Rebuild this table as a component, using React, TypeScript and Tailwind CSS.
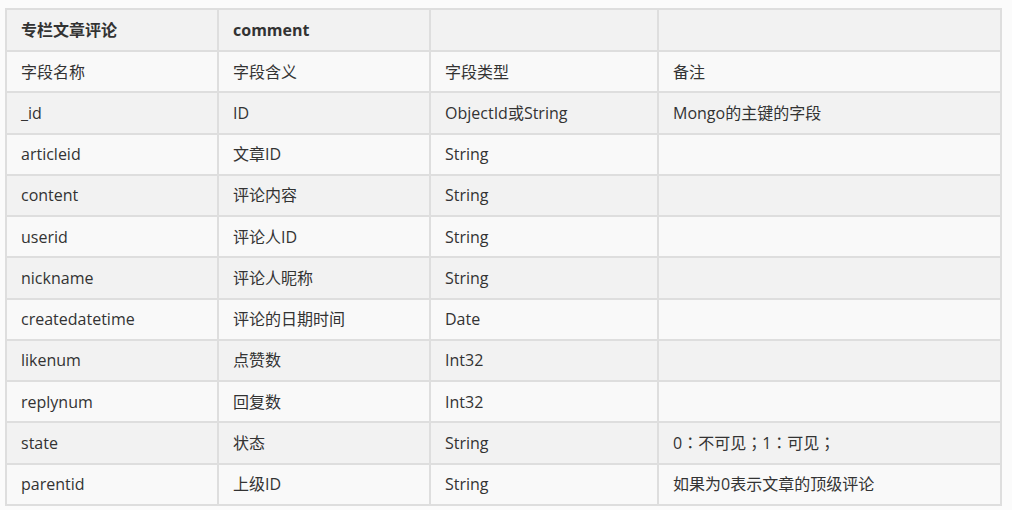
const rows: string[][] = [
  ['字段名称', '字段含义', '字段类型', '备注'],
  ['_id', 'ID', 'ObjectId或String', 'Mongo的主键的字段'],
  ['articleid', '文章ID', 'String', ''],
  ['content', '评论内容', 'String', ''],
  ['userid', '评论人ID', 'String', ''],
  ['nickname', '评论人昵称', 'String', ''],
  ['createdatetime', '评论的日期时间', 'Date', ''],
  ['likenum', '点赞数', 'Int32', ''],
  ['replynum', '回复数', 'Int32', ''],
  ['state', '状态', 'String', '0：不可见；1：可见；'],
  ['parentid', '上级ID', 'String', '如果为0表示文章的顶级评论'],
];

const cell = 'border-2 border-[#dedede] px-[14px] align-middle';

export default function App() {
  return (
    <div className="min-h-screen bg-[#fbfbfb] pl-[5px] pt-[8px] font-['Open_Sans','Noto_Sans_CJK_SC',sans-serif] text-[16px] text-[#333]">
      <table className="border-collapse table-fixed w-[995px]">
        <colgroup>
          <col className="w-[212px]" />
          <col className="w-[212px]" />
          <col className="w-[228px]" />
          <col className="w-[343px]" />
        </colgroup>
        <tbody>
          <tr className="h-[42px] bg-[#f2f2f2] font-bold">
            <td className={cell}>专栏文章评论</td>
            <td className={cell}>comment</td>
            <td className={cell}></td>
            <td className={cell}></td>
          </tr>
          {rows.map((r, i) => (
            <tr key={i} className={`h-[41.28px] ${i % 2 === 0 ? 'bg-[#f9f9f9]' : 'bg-[#f2f2f2]'}`}>
              {r.map((c, j) => (
                <td
                  key={j}
                  className={`${cell} ${j === 3 && i === 9 ? "font-['Open_Sans','Noto_Sans_CJK_TC',sans-serif]" : ''}`}
                >
                  {c}
                </td>
              ))}
            </tr>
          ))}
        </tbody>
      </table>
    </div>
  );
}
